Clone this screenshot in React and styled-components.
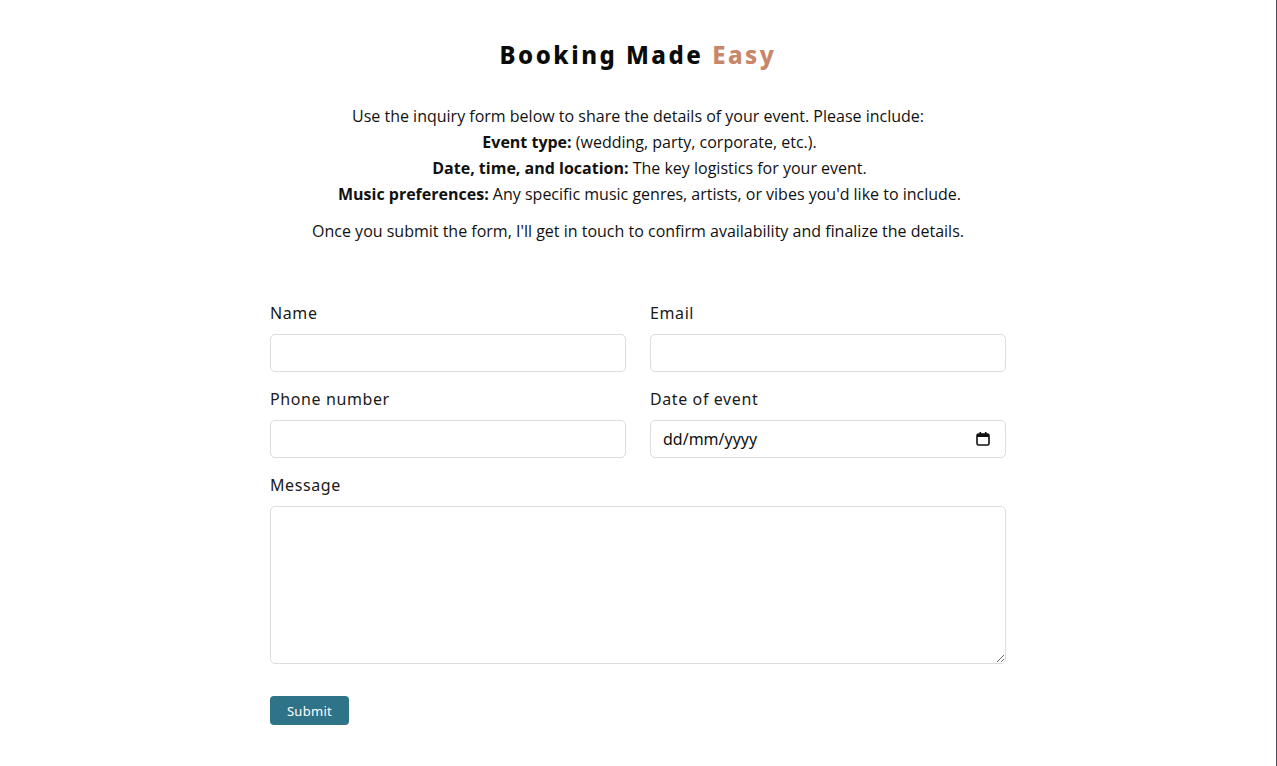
import React from "react";
import styled, { createGlobalStyle } from "styled-components";

const GlobalStyle = createGlobalStyle`
  html, body {
    margin: 0;
    padding: 0;
    background: #ffffff;
  }
  body {
    font-family: "Open Sans", "Liberation Sans", sans-serif;
    color: #111;
  }
`;

const Page = styled.div`
  min-height: 100vh;
  box-sizing: border-box;
  border-right: 1px solid #4b4b53;
  padding-top: 40px;
`;

const Wrap = styled.div`
  width: 736px;
  margin: 0 auto;
`;

const Title = styled.h1`
  margin: 0;
  text-align: center;
  font-family: "Noto Sans", sans-serif;
  font-weight: 800;
  font-size: 24px;
  line-height: 30px;
  letter-spacing: 2.5px;
  color: #0b0b0b;
`;

const Accent = styled.span`
  color: #c8876a;
`;

const Intro = styled.div`
  margin-top: 33px;
  text-align: center;
  font-size: 16px;
  line-height: 26px;
`;

const IntroPara = styled.p`
  margin: ${(p) => (p.$spaced ? "11px 0 0" : "0")};
`;

const Points = styled.ul`
  list-style: none;
  margin: 0;
  padding: 0 0 0 23px;
`;

const Point = styled.li`
  line-height: 26px;
`;

const Form = styled.form`
  margin-top: 59px;
  display: grid;
  grid-template-columns: 356px 356px;
  column-gap: 24px;
  row-gap: 17px;
`;

const Field = styled.div`
  display: flex;
  flex-direction: column;
  grid-column: ${(p) => (p.$wide ? "1 / -1" : "auto")};
`;

const Label = styled.label`
  font-family: "Noto Sans", sans-serif;
  font-size: 16px;
  line-height: 20px;
  letter-spacing: 0.6px;
  color: #1a1a1a;
  margin-bottom: 11px;
`;

const Input = styled.input`
  box-sizing: border-box;
  width: 100%;
  height: 38px;
  border: 1px solid #dcdcdc;
  border-radius: 5px;
  padding: 0 12px;
  font-family: "Noto Sans", sans-serif;
  font-size: 16px;
  color: #111;
  background: #fff;
  outline: none;
`;

const DateBox = styled.div`
  position: relative;
`;

const CalIcon = styled.svg`
  position: absolute;
  right: 15px;
  top: 11px;
  pointer-events: none;
`;

const TextArea = styled.textarea`
  box-sizing: border-box;
  width: 100%;
  height: 158px;
  border: 1px solid #dcdcdc;
  border-radius: 5px;
  padding: 10px 12px;
  font-family: "Noto Sans", sans-serif;
  font-size: 16px;
  resize: vertical;
  outline: none;
`;

const Submit = styled.button`
  margin-top: 32px;
  width: 79px;
  height: 29px;
  border: none;
  border-radius: 4px;
  background: #2f7389;
  color: #fff;
  font-family: "Noto Sans", sans-serif;
  font-size: 13px;
  letter-spacing: 0.3px;
  cursor: pointer;
`;

export default function App() {
  return (
    <>
      <GlobalStyle />
      <Page>
        <Wrap>
          <Title>
            Booking Made <Accent>Easy</Accent>
          </Title>
          <Intro>
            <IntroPara>
              Use the inquiry form below to share the details of your event. Please include:
            </IntroPara>
            <Points>
              <Point>
                <b>Event type:</b> (wedding, party, corporate, etc.).
              </Point>
              <Point>
                <b>Date, time, and location:</b> The key logistics for your event.
              </Point>
              <Point>
                <b>Music preferences:</b> Any specific music genres, artists, or vibes you'd like to include.
              </Point>
            </Points>
            <IntroPara $spaced>
              Once you submit the form, I'll get in touch to confirm availability and finalize the details.
            </IntroPara>
          </Intro>
          <Form onSubmit={(e) => e.preventDefault()}>
            <Field>
              <Label>Name</Label>
              <Input type="text" />
            </Field>
            <Field>
              <Label>Email</Label>
              <Input type="email" />
            </Field>
            <Field>
              <Label>Phone number</Label>
              <Input type="tel" />
            </Field>
            <Field>
              <Label>Date of event</Label>
              <DateBox>
                <Input type="text" defaultValue="dd/mm/yyyy" />
                <CalIcon width="16" height="16" viewBox="0 0 16 16">
                  <rect x="2" y="3" width="12" height="11" rx="1.5" fill="none" stroke="#111" strokeWidth="1.6" />
                  <rect x="2" y="3" width="12" height="3" fill="#111" />
                  <rect x="4.5" y="1" width="1.6" height="3" fill="#111" />
                  <rect x="9.9" y="1" width="1.6" height="3" fill="#111" />
                </CalIcon>
              </DateBox>
            </Field>
            <Field $wide>
              <Label>Message</Label>
              <TextArea />
            </Field>
          </Form>
          <Submit type="submit">Submit</Submit>
        </Wrap>
      </Page>
    </>
  );
}
